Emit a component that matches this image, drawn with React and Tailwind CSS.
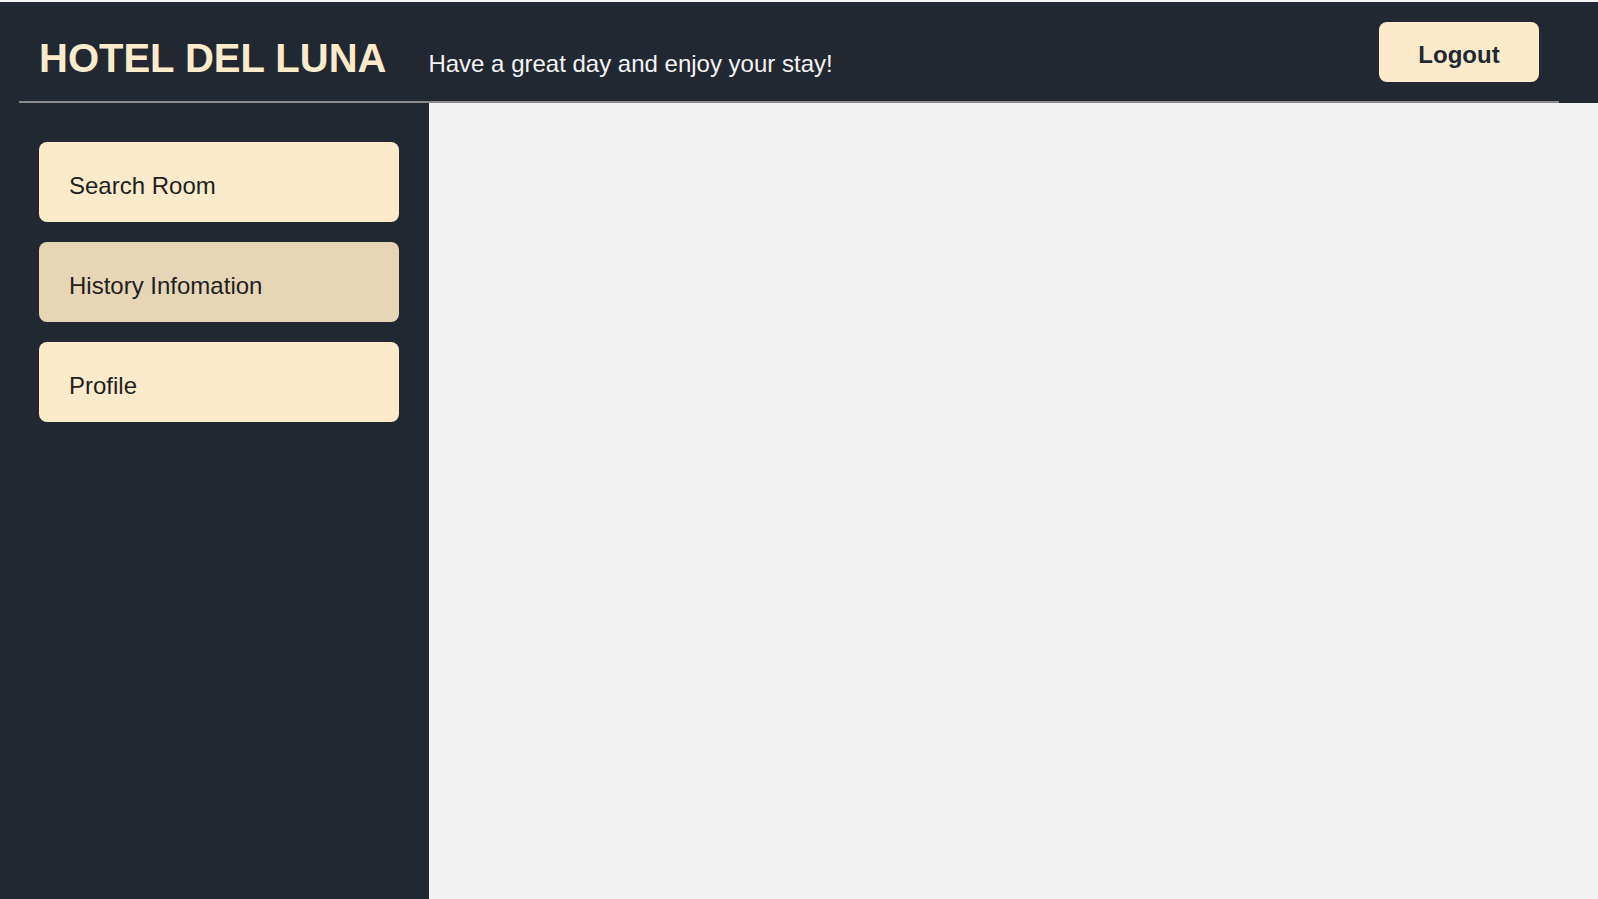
import React, { useState } from 'react';

const menuItems = ['Search Room', 'History Infomation', 'Profile'];

const App = () => {
  const [active, setActive] = useState('History Infomation');

  return (
    <div className="min-h-screen flex flex-col bg-[#222831] font-['Liberation_Sans',Arial,sans-serif]">
      <div className="h-[2px] bg-[#f4f4f4]" />

      {/* Header */}
      <header className="ml-[19px] mr-[39px] h-[101px] flex items-start justify-between border-b-2 border-[#8b8b8b] pl-5 pr-5">
        <div className="flex items-baseline gap-[42px] pt-[36px]">
          <h1 className="text-[40px] leading-[40px] font-bold text-[#fbebcb]">HOTEL DEL LUNA</h1>
          <p className="text-2xl text-[#f4f4f4]">Have a great day and enjoy your stay!</p>
        </div>
        <button className="mt-5 w-[160px] h-[60px] pt-[6px] rounded-lg bg-[#fbebcb] text-2xl font-bold text-[#222831]">
          Logout
        </button>
      </header>

      <div className="flex flex-1">
        {/* Sidebar */}
        <aside className="w-[429px] shrink-0 pt-[39px] pl-[39px] flex flex-col gap-5">
          {menuItems.map((item) => (
            <button
              key={item}
              onClick={() => setActive(item)}
              className={`w-[360px] h-[80px] rounded-lg pl-[30px] pt-2 text-left text-2xl text-[#1f1f1f] ${
                active === item ? 'bg-[#e6d6b6]' : 'bg-[#fbebcb]'
              }`}
            >
              {item}
            </button>
          ))}
        </aside>

        {/* Content */}
        <main className="flex-1 bg-[#f2f2f2]" />
      </div>
    </div>
  );
};

export default App;
